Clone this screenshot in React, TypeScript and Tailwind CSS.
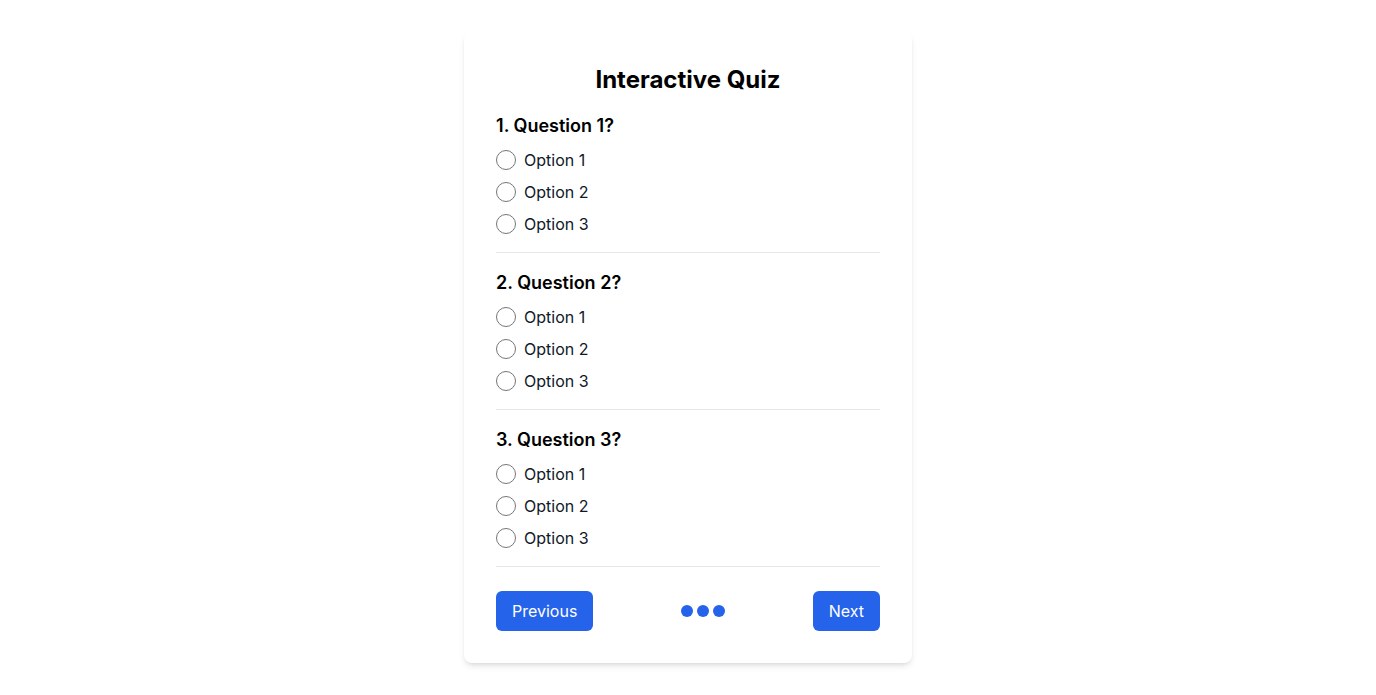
import { useState } from 'react';

const questions = [
    { id: 1, text: 'Question 1?', options: ['Option 1', 'Option 2', 'Option 3'] },
    { id: 2, text: 'Question 2?', options: ['Option 1', 'Option 2', 'Option 3'] },
    { id: 3, text: 'Question 3?', options: ['Option 1', 'Option 2', 'Option 3'] },
];

export default function App() {
    const [answers, setAnswers] = useState<Record<number, string>>({});

    return (
        <div className="min-h-screen bg-white pt-8 font-['Inter',sans-serif]">
            <div className="mx-auto max-w-md rounded-lg bg-white p-8 shadow-md">
                <h1 className="mb-4 text-center text-2xl font-bold text-black">Interactive Quiz</h1>

                {questions.map((q) => (
                    <div key={q.id} className="mb-4 border-b border-gray-200 pb-4">
                        <h2 className="mb-2 text-lg font-semibold text-black">
                            {q.id}. {q.text}
                        </h2>
                        <div className="flex flex-col gap-2">
                            {q.options.map((opt) => (
                                <label key={opt} className="flex cursor-pointer items-center gap-2 text-base text-[#111827]">
                                    <input
                                        type="radio"
                                        name={`q${q.id}`}
                                        value={opt}
                                        checked={answers[q.id] === opt}
                                        onChange={() => setAnswers((prev) => ({ ...prev, [q.id]: opt }))}
                                        className="h-5 w-5 accent-[#2563eb]"
                                    />
                                    <span>{opt}</span>
                                </label>
                            ))}
                        </div>
                    </div>
                ))}

                <div className="mt-6 flex items-center justify-between">
                    <button className="rounded-md bg-[#2563eb] px-4 py-2 text-base text-white hover:bg-[#1d4ed8]">
                        Previous
                    </button>
                    <div className="flex gap-1">
                        <span className="h-3 w-3 rounded-full bg-[#2563eb]"></span>
                        <span className="h-3 w-3 rounded-full bg-[#2563eb]"></span>
                        <span className="h-3 w-3 rounded-full bg-[#2563eb]"></span>
                    </div>
                    <button className="rounded-md bg-[#2563eb] px-4 py-2 text-base text-white hover:bg-[#1d4ed8]">
                        Next
                    </button>
                </div>
            </div>
        </div>
    );
}
